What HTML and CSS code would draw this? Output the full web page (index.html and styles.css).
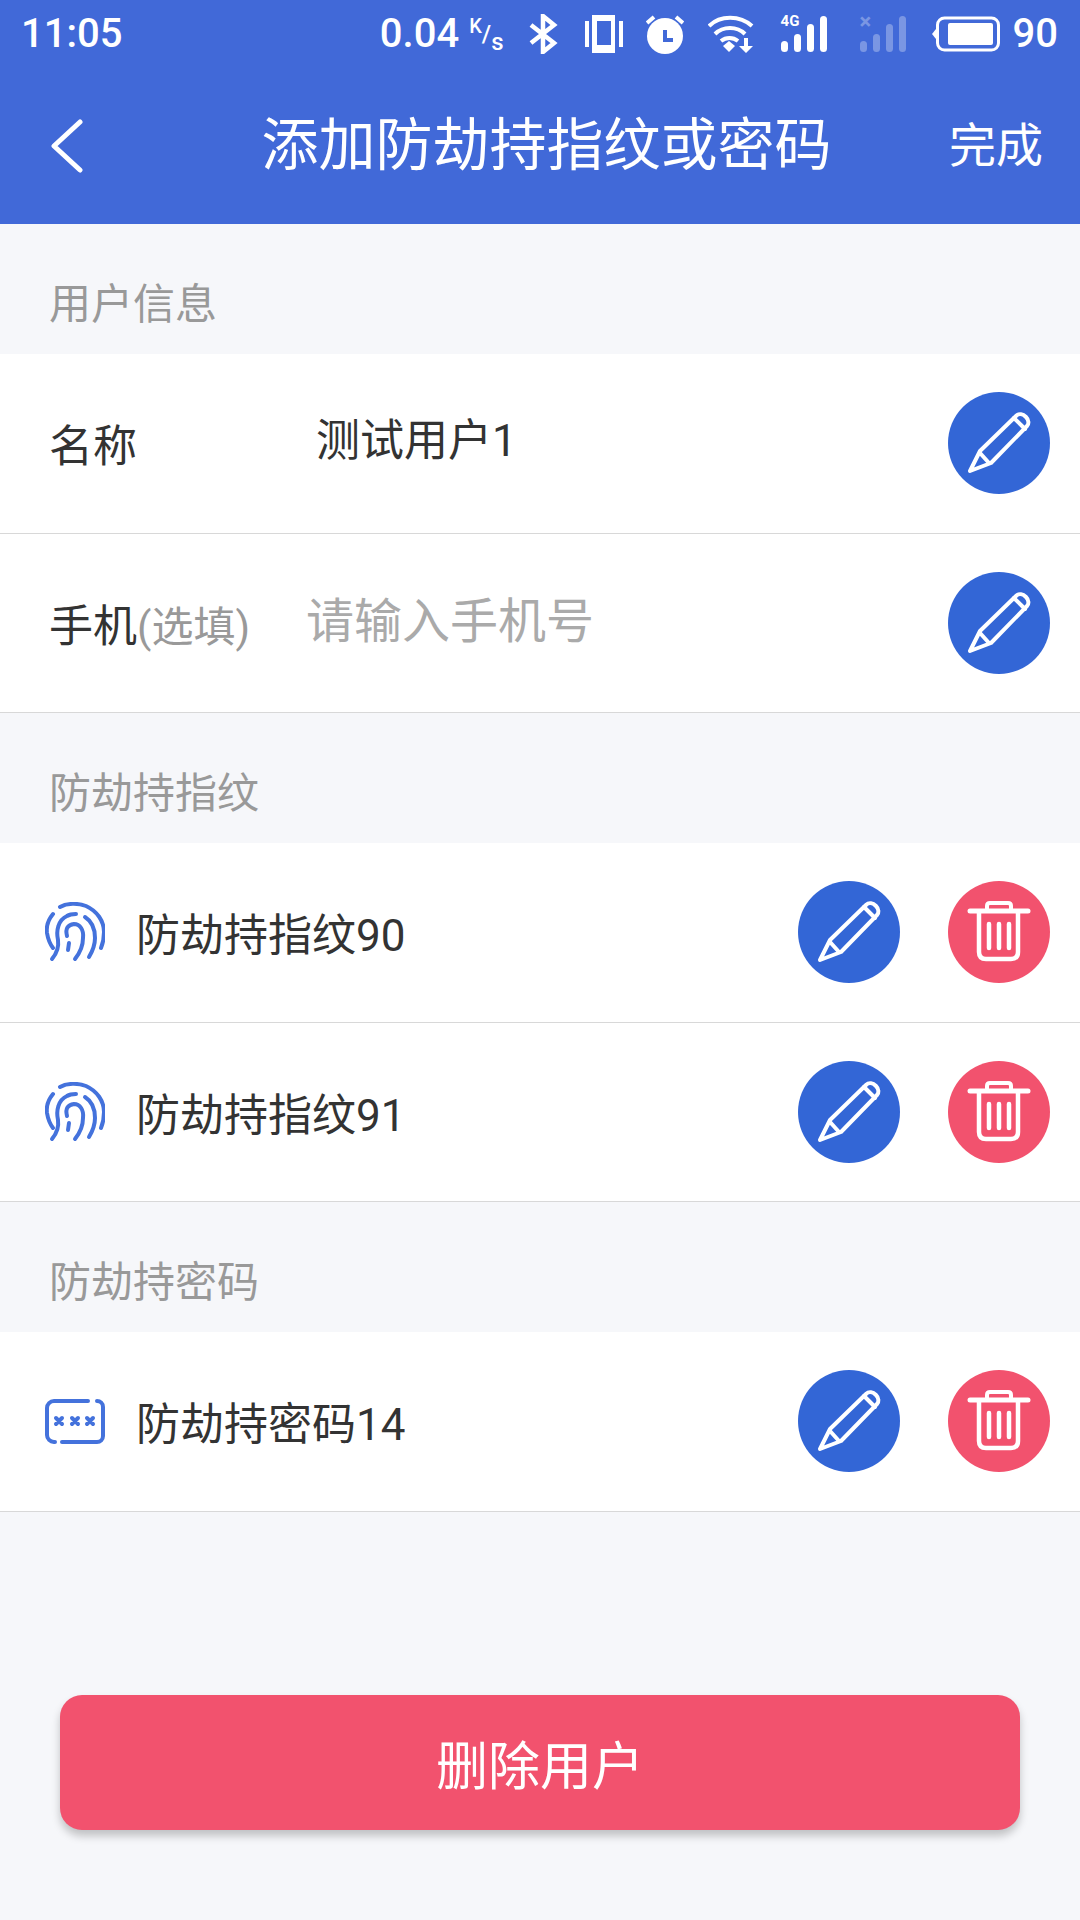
FILE: index.html
```html
<!DOCTYPE html>
<html lang="zh-CN">
<head>
<meta charset="utf-8">
<title>添加防劫持指纹或密码</title>
<link rel="stylesheet" href="styles.css">
</head>
<body>
<svg class="defs" width="0" height="0" aria-hidden="true">
  <symbol id="i-pencil" viewBox="0 0 102 102">
    <g fill="none" stroke="#fff" stroke-width="4" stroke-linejoin="round" stroke-linecap="round">
      <path d="M22 79 L32 59 L68 24 C71 21 75 22 78 25 C81 28 81 32 79 34 L43 71 Z"/>
      <path d="M32 61 L41 71"/>
      <path d="M66 26 L77 37"/>
    </g>
  </symbol>
  <symbol id="i-trash" viewBox="0 0 102 102">
    <g fill="none" stroke="#fff" stroke-linecap="round" stroke-linejoin="round">
      <path d="M22 30 H80" stroke-width="5"/>
      <path d="M39 28 V25 Q39 22 42 22 H60 Q63 22 63 25 V28" stroke-width="4"/>
      <path d="M31 32 V71 Q31 78 38 78 H63 Q70 78 70 71 V32" stroke-width="4.5"/>
      <path d="M41 43 V67 M51 43 V67 M61 43 V67" stroke-width="4.5"/>
    </g>
  </symbol>
  <symbol id="i-finger" viewBox="0 0 60 60">
    <g fill="none" stroke="#4472dc" stroke-width="4" stroke-linecap="round">
      <path d="M15 5 C22 1 33 1 41 4 C52 9 59 19 59 30 C59 36 58 41 56 46"/>
      <path d="M8 12 C3 18 1 24 2 31 C3 37 5 42 8 46"/>
      <path d="M7 57 C12 51 14 45 13 38 C11 29 13 18 22 14 C25 12 28 12 31 12"/>
      <path d="M40 15 C48 20 50 29 50 36 C50 43 47 50 44 55"/>
      <path d="M22 34 C20 26 23 23 29 22 C35 22 39 28 38 36 C38 44 34 52 30 57"/>
      <path d="M24 41 L23 48"/>
    </g>
  </symbol>
  <symbol id="i-code" viewBox="0 0 60 45">
    <g fill="none" stroke="#4472dc" stroke-linecap="round">
      <path d="M43 2 H9 A7 7 0 0 0 2 9 V36 A7 7 0 0 0 9 43 H10 M52 2 A6 6 0 0 1 58 8 V37 A6 6 0 0 1 52 43 H17" stroke-width="4"/>
      <path d="M11 19 L17 25 M17 19 L11 25 M27 19 L33 25 M33 19 L27 25 M42 19 L48 25 M48 19 L42 25" stroke-width="4"/>
    </g>
  </symbol>
</svg>

<header class="topbar">
  <div class="status">
    <span class="clock">11:05</span>
    <div class="status-right">
      <span class="speed">0.04<span class="speed-unit"><sup>K</sup>/<sub>s</sub></span></span>
      <svg class="st bt" width="30" height="40" viewBox="0 0 30 40"><path d="M3 11 L26 29 L15 38 V2 L26 11 L3 29" fill="none" stroke="#fff" stroke-width="4.5"/></svg>
      <svg class="st vib" width="38" height="38" viewBox="0 0 38 38"><path fill="#fff" d="M0 6 H4 V32 H0 Z M34 6 H38 V32 H34 Z"/><path fill="#fff" fill-rule="evenodd" d="M7 0 H30 V38 H7 Z M12 6 V30 H26 V6 Z"/></svg>
      <svg class="st alarm" width="38" height="40" viewBox="0 0 38 40"><circle cx="19" cy="22" r="18" fill="#fff"/><path d="M1 9 L8 3 M37 9 L30 3" stroke="#fff" stroke-width="4"/><path d="M19 16 V26 H27" fill="none" stroke="#4169d8" stroke-width="4"/></svg>
      <svg class="st wifi" width="46" height="40" viewBox="0 0 46 40"><g fill="none" stroke="#fff" stroke-width="4"><path d="M1 12 C12 1 32 1 44 12"/><path d="M7 20 C15 12 29 12 37 20"/><path d="M13 27 C18 23 25 23 30 27"/></g><path fill="#fff" d="M15 32 L21 27 L27 32 L21 38 Z"/><path fill="#fff" d="M36 24 H40 V32 H45 L38 39 L31 32 H36 Z"/></svg>
      <div class="sig">
        <span class="sig-tag">4G</span>
        <svg width="47" height="38" viewBox="0 0 47 38"><g fill="#fff"><rect x="0" y="26" width="7" height="11" rx="3.5"/><rect x="13" y="19" width="7" height="18" rx="3.5"/><rect x="26" y="9" width="7" height="28" rx="3.5"/><rect x="39" y="1" width="7" height="36" rx="3.5"/></g></svg>
      </div>
      <div class="sig sig-off">
        <span class="sig-tag">×</span>
        <svg width="47" height="38" viewBox="0 0 47 38"><g fill="#fff"><rect x="0" y="26" width="7" height="11" rx="3.5"/><rect x="13" y="19" width="7" height="18" rx="3.5"/><rect x="26" y="9" width="7" height="28" rx="3.5"/><rect x="39" y="1" width="7" height="36" rx="3.5"/></g></svg>
      </div>
      <svg class="st batt" width="68" height="36" viewBox="0 0 68 36"><path d="M0 18 L4 13 V23 Z" fill="#fff"/><rect x="5.5" y="2" width="61" height="32" rx="7" fill="none" stroke="#fff" stroke-width="3"/><rect x="16" y="7" width="45" height="22" rx="2" fill="#fff"/></svg>
      <span class="pct">90</span>
    </div>
  </div>
  <nav class="nav">
    <span class="nav-back"><svg width="34" height="54" viewBox="0 0 34 54"><path d="M30 3 L4 27 L30 51" fill="none" stroke="#fff" stroke-width="5" stroke-linecap="round" stroke-linejoin="round"/></svg></span>
    <h1 class="nav-title">添加防劫持指纹或密码</h1>
    <span class="nav-done">完成</span>
  </nav>
</header>

<main class="content">
  <h2 class="section">用户信息</h2>
  <div class="row">
    <span class="row-label row-label-name">名称</span>
    <span class="row-value">测试用户1</span>
    <span class="round edit"><svg class="glyph"><use href="#i-pencil"/></svg></span>
  </div>
  <div class="row">
    <span class="row-label row-label-phone">手机<small class="hint">(选填)</small></span>
    <span class="row-value placeholder">请输入手机号</span>
    <span class="round edit"><svg class="glyph"><use href="#i-pencil"/></svg></span>
  </div>

  <h2 class="section">防劫持指纹</h2>
  <div class="row">
    <svg class="lead lead-finger"><use href="#i-finger"/></svg>
    <span class="row-name">防劫持指纹90</span>
    <span class="round edit"><svg class="glyph"><use href="#i-pencil"/></svg></span>
    <span class="round remove"><svg class="glyph"><use href="#i-trash"/></svg></span>
  </div>
  <div class="row">
    <svg class="lead lead-finger"><use href="#i-finger"/></svg>
    <span class="row-name">防劫持指纹91</span>
    <span class="round edit"><svg class="glyph"><use href="#i-pencil"/></svg></span>
    <span class="round remove"><svg class="glyph"><use href="#i-trash"/></svg></span>
  </div>

  <h2 class="section">防劫持密码</h2>
  <div class="row">
    <svg class="lead lead-code"><use href="#i-code"/></svg>
    <span class="row-name">防劫持密码14</span>
    <span class="round edit"><svg class="glyph"><use href="#i-pencil"/></svg></span>
    <span class="round remove"><svg class="glyph"><use href="#i-trash"/></svg></span>
  </div>
</main>

<div class="footer">
  <button class="danger" type="button">删除用户</button>
</div>
</body>
</html>
```

FILE: styles.css
```css
* { box-sizing: border-box; }

html, body { margin: 0; padding: 0; }

body {
  width: 1080px;
  height: 1920px;
  display: flex;
  flex-direction: column;
  overflow: hidden;
  background: #f6f7fa;
  color: #333;
  font-family: Roboto, "Noto Sans CJK SC", sans-serif;
}

.defs { position: absolute; }

/* Blue header: status strip plus title bar */
.topbar {
  height: 224px;
  flex: none;
  background: #4169d8;
  color: #fff;
}

.status {
  height: 68px;
  display: flex;
  align-items: center;
  justify-content: space-between;
  padding: 0 22px 0 21px;
}

.clock, .speed, .pct {
  font-size: 40px;
  font-weight: 500;
  line-height: 40px;
}

.status-right {
  display: flex;
  align-items: center;
}

.speed { display: flex; margin-right: 24px; }

.speed-unit {
  font-size: 24px;
  line-height: 40px;
  margin-left: 10px;
  display: flex;
  align-items: center;
  font-weight: 500;
}

.speed-unit sup { font-size: 20px; line-height: 20px; align-self: flex-start; margin-top: 2px; }
.speed-unit sub { font-size: 24px; line-height: 24px; align-self: flex-end; }

.st { flex: none; display: block; }
.bt { margin-right: 27px; }
.vib { margin-right: 23px; }
.alarm { margin-right: 24px; }
.wifi { margin-right: 27px; }

.sig {
  position: relative;
  width: 47px;
  height: 38px;
  margin-right: 32px;
}

.sig svg { display: block; }

.sig-tag {
  position: absolute;
  left: 0;
  top: -1px;
  font-size: 15px;
  line-height: 15px;
  font-weight: 700;
}

.sig-off { opacity: .3; margin-right: 25px; }
.sig-off .sig-tag { font-size: 22px; line-height: 14px; left: 0; top: 0; }

.batt { margin-right: 13px; }

.nav {
  height: 156px;
  padding: 0 37px 0 50px;
  display: grid;
  grid-template-columns: 1fr auto 1fr;
  align-items: center;
}

.nav-back { display: flex; }

.nav-title {
  margin: 0;
  font-size: 57px;
  font-weight: 400;
  line-height: 70px;
}

.nav-done {
  justify-self: end;
  font-size: 47px;
  line-height: 60px;
}

/* Form sections */
.section {
  height: 130px;
  margin: 0;
  padding-top: 30px;
  font-size: 42px;
  font-weight: 400;
  line-height: 102px;
  color: #999;
  padding-left: 49px;
}

.row {
  height: 179.5px;
  display: flex;
  align-items: center;
  padding-right: 30px;
  background: #fff;
  border-bottom: 1px solid #d8d8d8;
}

.row-label {
  padding-left: 49px;
  font-size: 44px;
  color: #333;
  white-space: nowrap;
}

.row-label-name { width: 316px; }
.row-label-phone { width: 306px; }

.hint { font-size: 42px; color: #999; }

.row-value {
  flex: 1;
  font-size: 44px;
  padding-bottom: 12px;
}

.placeholder { font-size: 48px; color: #aaa; }

.lead { flex: none; display: block; }
.lead-finger { width: 60px; height: 60px; margin-left: 45px; margin-right: 31px; }
.lead-code { width: 60px; height: 45px; margin-left: 45px; margin-right: 31px; }

.row-name { flex: 1; font-size: 44px; }

.round {
  flex: none;
  width: 102px;
  height: 102px;
  border-radius: 50%;
  display: flex;
}

.round + .round { margin-left: 48px; }

.edit { background: #3366d6; }
.remove { background: #f2526e; }

.glyph { width: 102px; height: 102px; display: block; }

/* Destructive action at the foot of the page */
.footer {
  margin-top: auto;
  padding: 0 60px 90px;
}

.danger {
  display: block;
  width: 960px;
  height: 135px;
  border: 0;
  border-radius: 22px;
  background: #f2526e;
  color: #fff;
  font-family: inherit;
  font-size: 52px;
  box-shadow: 0 6px 8px rgba(0, 0, 0, .22);
}
```
